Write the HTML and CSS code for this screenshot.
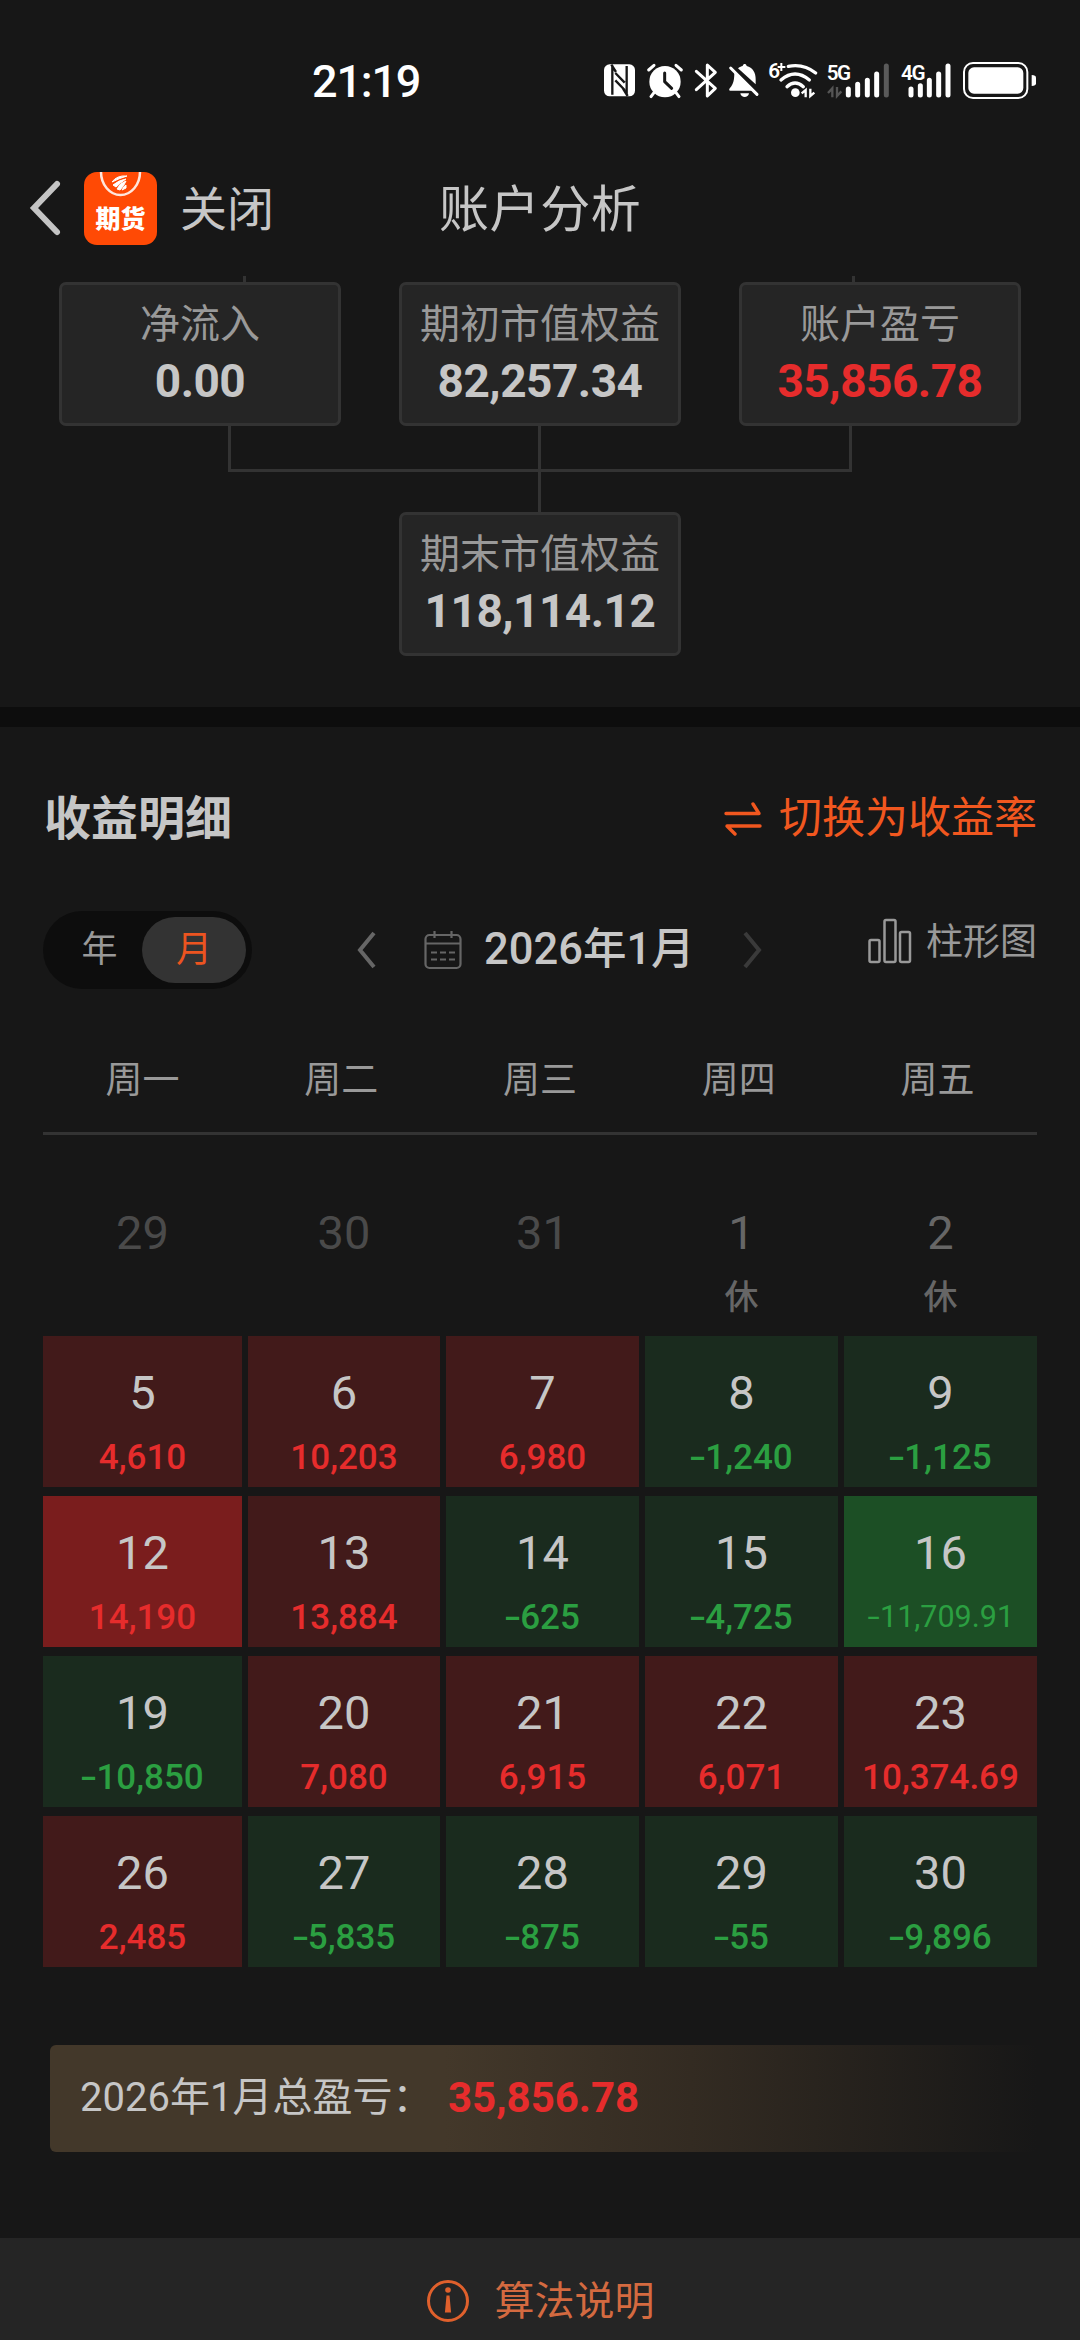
FILE: index.html
```html
<!DOCTYPE html>
<html lang="zh-CN">
<head>
<meta charset="utf-8">
<title>账户分析</title>
<link rel="stylesheet" href="styles.css">
</head>
<body>
<div class="status">
  <span class="time">21:19</span>
  <div class="status-icons">
    <svg width="40" height="44" viewBox="66 54 120 132"><rect x="72" y="73" width="93" height="96" rx="17" fill="#fff"/><path d="M97 76v88M140 78v88M106 99l28 29M106 121l28 29M94 74l14 22M143 168l-14-22" fill="none" stroke="#171717" stroke-width="7"/></svg>
    <svg width="48" height="44" viewBox="186 54 144 132"><circle cx="255" cy="125" r="47" fill="#fff"/><path d="M222 158l-9 12M288 158l9 12M206 90l16-14M288 76l16 14" stroke="#fff" stroke-width="9" stroke-linecap="round"/><path d="M254 99v26l21 20" fill="none" stroke="#171717" stroke-width="9" stroke-linecap="round" stroke-linejoin="round"/></svg>
    <svg width="34" height="44" viewBox="330 54 102 132"><path d="M349 94l57 51-24 23V75l24 22-57 52" fill="none" stroke="#fff" stroke-width="9" stroke-linejoin="round" stroke-linecap="round"/></svg>
    <svg width="40" height="44" viewBox="432 54 120 132"><path d="M463 97l61 55h-73c-5 0-4-5-1-8 11-11 13-27 13-47zM474 85c6-5 10-6 14-7 2-8 10-8 12 0 18 4 27 20 27 40v15z" fill="#fff"/><path d="M481 160h26c-2 15-24 15-26 0z" fill="#fff"/><path d="M452 84l79 79" stroke="#fff" stroke-width="9" stroke-linecap="round"/></svg>
    <svg width="58" height="44" viewBox="552 54 174 132"><text x="565" y="113" class="net-tag">6</text><path d="M593 81h23M604 69v24" stroke="#fff" stroke-width="6"/><path d="M625 79q46-9 82 20M603 120q42-36 85 0M621 140q24-22 49 0" fill="none" stroke="#fff" stroke-width="10" stroke-linecap="round"/><circle cx="646" cy="158" r="13" fill="#fff"/><path d="M677 172v-22l-12 10M691 146v22l12-10" fill="none" stroke="#fff" stroke-width="7"/></svg>
    <svg width="74" height="44" viewBox="726 54 222 132"><text x="740" y="120" class="net-tag">5G</text><path d="M757 172v-27l-13 14M771 141v27l13-14" fill="none" stroke="#555" stroke-width="7"/><path d="M805 147v18M833 133v32M862 121v44M890 102v63" stroke="#fff" stroke-width="15" stroke-linecap="round"/><path d="M919 78v87" stroke="#5a5a5a" stroke-width="15" stroke-linecap="round"/></svg>
    <svg width="62" height="44" viewBox="948 54 186 132"><text x="963" y="120" class="net-tag">4G</text><path d="M993 147v18M1021 137v28M1048 121v44M1076 102v63M1104 78v87" stroke="#fff" stroke-width="15" stroke-linecap="round"/></svg>
    <svg width="82" height="44" viewBox="1134 54 246 132"><rect x="1152" y="69" width="190" height="105" rx="27" fill="none" stroke="#fff" stroke-width="6"/><rect x="1165" y="82" width="165" height="79" rx="17" fill="#fff"/><path d="M1355 105q13 0 13 8v17q0 8-13 8z" fill="#fff"/></svg>
  </div>
</div>

<header class="nav">
  <svg class="back" width="34" height="58" viewBox="0 0 34 58"><path d="M29 5L6 29l23 24" fill="none" stroke="#c4c4c4" stroke-width="6" stroke-linecap="round"/></svg>
  <div class="app-icon">
    <svg width="73" height="25" viewBox="0 0 73 25"><path d="M17 0a19.5 23 0 0 0 39 0" fill="none" stroke="#ffe6dc" stroke-width="2.5"/><path d="M28 10q5-7 15-6-7 2-15 6zM29 13q6-5 13-6-6 4-10 8zM33 17q3-6 9-8-2 5-6 9zM38 18q2-4 4-5v3z" fill="#fff" stroke="#fff"/></svg>
    <span>期货</span>
  </div>
  <span class="close">关闭</span>
  <h1>账户分析</h1>
</header>

<section class="equity">
  <div class="stubs"><i></i><i></i></div>
  <div class="cards">
    <div class="card"><span>净流入</span><b>0.00</b></div>
    <div class="card"><span>期初市值权益</span><b>82,257.34</b></div>
    <div class="card"><span>账户盈亏</span><b class="up">35,856.78</b></div>
  </div>
  <div class="links"><div class="bracket"></div><div class="stem"></div></div>
  <div class="card total"><span>期末市值权益</span><b>118,114.12</b></div>
</section>

<div class="divider"></div>

<section class="detail">
  <div class="detail-head">
    <h2>收益明细</h2>
    <div class="switch">
      <svg width="38" height="34" viewBox="0 0 38 34"><path d="M2 11.500h33L29 2M36 24H3l8 8" fill="none" stroke="#f1571f" stroke-width="3.400" stroke-linecap="round" stroke-linejoin="round"/></svg>
      <span>切换为收益率</span>
    </div>
  </div>

  <div class="toolbar">
    <div class="toggle"><span>年</span><span class="on">月</span></div>
    <div class="month">
      <svg width="20" height="38" viewBox="0 0 20 38"><path d="M17 2L3 19l14 17" fill="none" stroke="#666" stroke-width="4"/></svg>
      <svg class="cal" width="38" height="40" viewBox="0 0 38 40"><rect x="1.5" y="5" width="35" height="33" rx="4" fill="none" stroke="#666" stroke-width="2.2"/><path d="M1 13.500h36M10.500 1v7M27.500 1v7M7 22.500h6M16 22.500h6M25 22.500h6M7 29.500h6M16 29.500h6M25 29.500h6" stroke="#666" stroke-width="2.2"/></svg>
      <strong>2026年1月</strong>
      <svg width="20" height="38" viewBox="0 0 20 38"><path d="M3 2l14 17L3 36" fill="none" stroke="#3a3a3a" stroke-width="4"/></svg>
    </div>
    <div class="chart-btn">
      <svg width="44" height="46" viewBox="0 0 44 46"><g fill="none" stroke="#999" stroke-width="2.500"><rect x="1.500" y="22" width="10" height="22" rx="1.500"/><rect x="16.500" y="2" width="11" height="42" rx="1.500"/><rect x="32" y="14" width="10" height="30" rx="1.500"/></g></svg>
      <span>柱形图</span>
    </div>
  </div>

  <div class="week"><span>周一</span><span>周二</span><span>周三</span><span>周四</span><span>周五</span></div>

  <div class="grid">
    <div class="day other"><b>29</b></div>
    <div class="day other"><b>30</b></div>
    <div class="day other"><b>31</b></div>
    <div class="day rest"><b>1</b><span>休</span></div>
    <div class="day rest"><b>2</b><span>休</span></div>
    <div class="day gain"><b>5</b><span>4,610</span></div>
    <div class="day gain"><b>6</b><span>10,203</span></div>
    <div class="day gain"><b>7</b><span>6,980</span></div>
    <div class="day loss"><b>8</b><span><i>-</i>1,240</span></div>
    <div class="day loss"><b>9</b><span><i>-</i>1,125</span></div>
    <div class="day gain max"><b>12</b><span>14,190</span></div>
    <div class="day gain"><b>13</b><span>13,884</span></div>
    <div class="day loss"><b>14</b><span><i>-</i>625</span></div>
    <div class="day loss"><b>15</b><span><i>-</i>4,725</span></div>
    <div class="day loss max"><b>16</b><span class="small"><i>-</i>11,709.91</span></div>
    <div class="day loss"><b>19</b><span><i>-</i>10,850</span></div>
    <div class="day gain"><b>20</b><span>7,080</span></div>
    <div class="day gain"><b>21</b><span>6,915</span></div>
    <div class="day gain"><b>22</b><span>6,071</span></div>
    <div class="day gain"><b>23</b><span>10,374.69</span></div>
    <div class="day gain"><b>26</b><span>2,485</span></div>
    <div class="day loss"><b>27</b><span><i>-</i>5,835</span></div>
    <div class="day loss"><b>28</b><span><i>-</i>875</span></div>
    <div class="day loss"><b>29</b><span><i>-</i>55</span></div>
    <div class="day loss"><b>30</b><span><i>-</i>9,896</span></div>
  </div>

  <div class="summary"><span>2026年1月总盈亏：</span><b>35,856.78</b></div>
</section>

<footer>
  <svg width="44" height="44" viewBox="0 0 44 44"><circle cx="22" cy="22" r="19.500" fill="none" stroke="#e0602c" stroke-width="3"/><circle cx="22" cy="11" r="2.800" fill="#e0602c"/><path d="M20.500 16.500h3l1.600 17h-6.200z" fill="#e0602c"/></svg>
  <span>算法说明</span>
</footer>
</body>
</html>
```
FILE: styles.css
```css
* { box-sizing: border-box; margin: 0; padding: 0; }
html, body { width: 1080px; height: 2340px; overflow: hidden; }
body {
  background: #171717;
  color: #c6c6c6;
  font-family: Roboto, "Noto Sans CJK SC", sans-serif;
  display: flex;
  flex-direction: column;
}
svg { display: block; flex: none; }
i { font-style: normal; }
span, b, strong, h1, h2 { white-space: nowrap; line-height: 1; }

.status { height: 115px; display: flex; padding: 58px 0 0 312px; flex: none; }
.time { width: 290px; font-size: 45px; font-weight: 500; color: #fff; line-height: 48px; letter-spacing: -1.2px; }
.status-icons { display: flex; }
.net-tag { font: 600 62px Roboto, sans-serif; fill: #fff; letter-spacing: -4px; }

.nav { height: 161px; display: flex; align-items: center; padding-left: 28px; flex: none; }
.nav .back { margin-top: 24px; }
.app-icon { width: 73px; height: 73px; margin: 26px 0 0 22px; border-radius: 13px; background: #ff4a05; display: flex; flex-direction: column; align-items: center; }
.app-icon span { font-size: 25px; font-weight: 900; color: #fff; margin-top: 10px; }
.close { font-size: 47px; margin: 28px 0 0 23px; }
h1 { font-size: 50px; font-weight: 400; margin: 28px 0 0 165px; letter-spacing: .6px; }

.equity { height: 431px; flex: none; }
.stubs { height: 6px; padding: 0 225px 0 243px; display: flex; justify-content: space-between; }
.stubs i { width: 3px; background: #333; }
.cards { display: flex; gap: 58px; padding: 0 59px; }
.card { width: 282px; height: 144px; background: #252525; border: 3px solid #333; border-radius: 7px; display: flex; flex-direction: column; align-items: center; padding-top: 20px; }
.card span { font-size: 40px; color: #999; height: 40px; }
.card b { font-size: 46px; height: 46px; margin-top: 13px; font-weight: 700; letter-spacing: -.5px; }
.card .up, .summary b { color: #e62c2c; }
.links { height: 86px; display: grid; padding: 0 228px; }
.bracket { grid-area: 1 / 1; height: 46px; border: 3px solid #333; border-top: 0; }
.stem { grid-area: 1 / 1; width: 3px; height: 86px; margin-left: 310px; background: #333; }
.card.total { margin: 0 auto; }
.divider { height: 20px; background: #0d0d0d; flex: none; }

.detail { height: 1511px; padding: 0 43px; flex: none; }
.detail-head { display: flex; justify-content: space-between; align-items: center; height: 180px; }
h2 { font-size: 47px; font-weight: 700; padding: 2px 0 0 1px; }
.switch { display: flex; align-items: center; gap: 17px; color: #f1571f; font-size: 43px; padding-top: 4px; }
.switch span { padding-bottom: 2px; }

.toolbar { display: flex; align-items: center; height: 86px; }
.toggle { width: 209px; height: 78px; border-radius: 39px; background: #0d0d0d; padding: 6px; display: flex; font-size: 36px; color: #999; }
.toggle span { flex: 1; display: flex; align-items: center; justify-content: center; }
.toggle span:first-child { padding-left: 8px; }
.toggle .on { flex: 0 0 104px; background: #333; border-radius: 33px; color: #ec5420; }
.month { display: flex; align-items: center; margin-left: 105px; }
.month .cal { margin-left: 47px; }
.month strong { font-size: 43.500px; font-weight: 500; margin: 0 52px 0 22px; width: 206px; }
.chart-btn { display: flex; align-items: center; margin-left: auto; gap: 14px; font-size: 37px; color: #999; margin-top: -16px; }
.chart-btn svg { margin-top: -2px; }

.week { display: grid; grid-template-columns: repeat(5, 1fr); height: 142px; border-bottom: 3px solid #333; font-size: 37px; color: #999; text-align: center; align-items: center; padding-top: 35px; }

.grid { display: grid; grid-template-columns: 199px 192px repeat(3, 193px); gap: 9px 6px; grid-auto-rows: 151px; margin-top: 41px; }
.day { display: flex; flex-direction: column; align-items: center; padding-top: 33px; }
.day b { font-size: 47px; font-weight: 400; height: 47px; }
.day span { font-size: 35px; height: 35px; margin-top: 24px; font-weight: 500; }
.day span.small { font-size: 30.500px; font-weight: 400; margin-top: 26px; }
.day span i { display: inline-block; width: .43em; transform: scaleX(1.45); text-align: center; }
.gain { background: #421a1a; }
.gain.max { background: #7a1d1d; }
.loss { background: #1a2b1e; }
.loss.max { background: #1c4f25; }
.gain span { color: #e62c2c; }
.loss span { color: #2b9f41; }
.other b { color: #4a4a4a; }
.rest, .rest b { color: #666; }
.rest span { font-size: 34px; }

.summary { margin: 78px 0 0 7px; height: 107px; border-radius: 6px; padding: 0 0 2px 30px; display: flex; align-items: center; background: linear-gradient(90deg, #43382a 0%, #43382a 40%, #332b22 65%, #171717 100%); }
.summary span { font-size: 40px; width: 368px; }
.summary b { font-size: 42px; }

footer { flex: 1; background: #252525; display: flex; justify-content: center; align-items: flex-start; padding-top: 41px; gap: 25px; font-size: 40px; color: #d46a40; }
footer span { line-height: 46px; }
```
